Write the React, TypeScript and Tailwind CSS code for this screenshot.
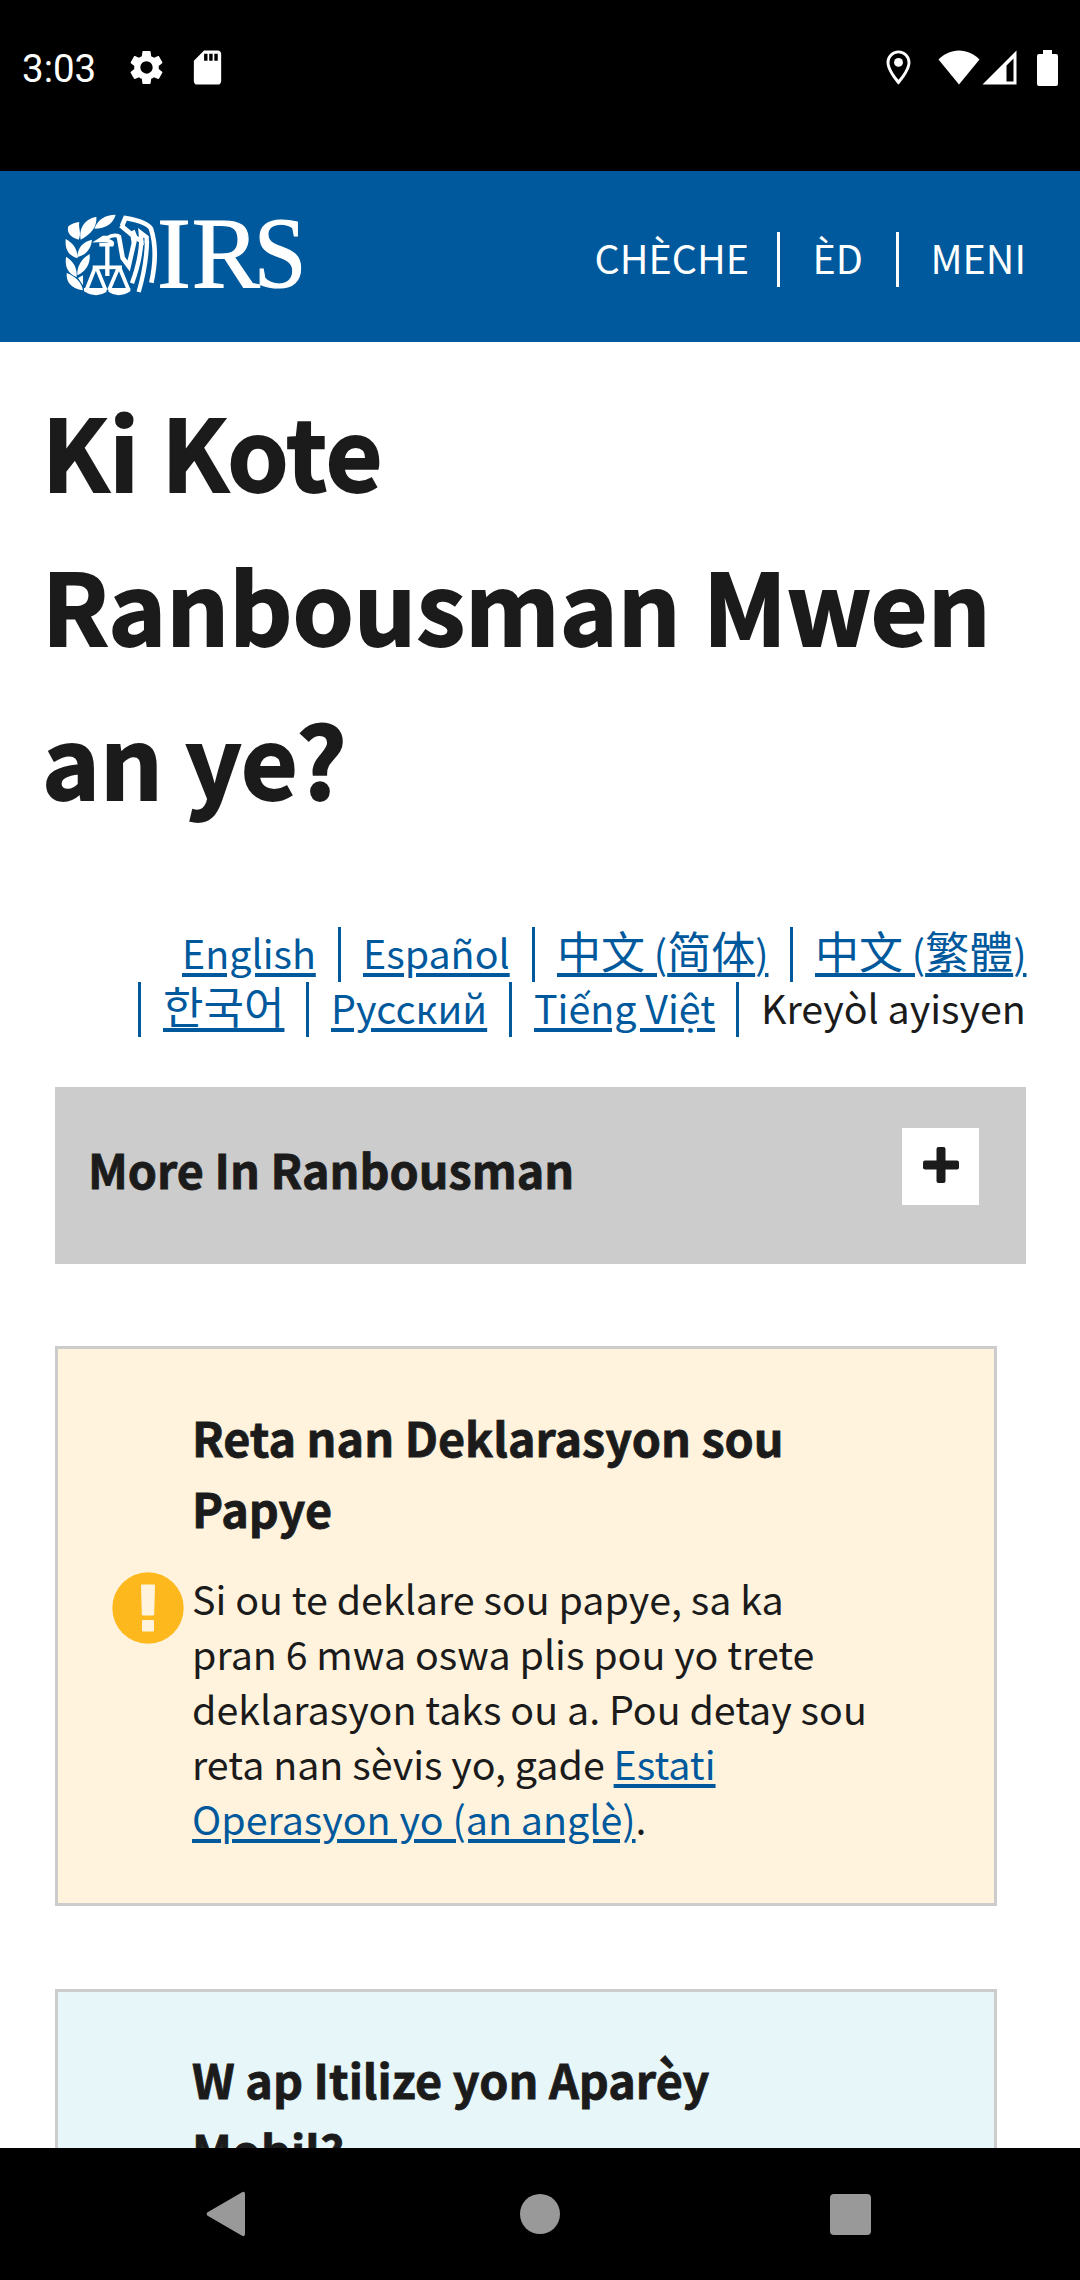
import React from "react";

const LINK = "text-[#00599c] underline decoration-[4px] underline-offset-[4px]";

function StatusBar() {
  return (
    <div className="flex h-[171px] items-start justify-between bg-black pt-[47px] text-white">
      <div className="flex h-[41px] items-center">
        <span className="w-[104px] pl-[22px] pt-px font-['Roboto',sans-serif] text-[38.5px] leading-[41px]">3:03</span>
        <svg className="ml-[22px] size-[41px]" viewBox="0 0 24 24" fill="currentColor">
          <path d="M19.14 12.94c.04-.3.06-.61.06-.94 0-.32-.02-.64-.07-.94l2.03-1.58c.18-.14.23-.41.12-.61l-1.92-3.32c-.12-.22-.37-.29-.59-.22l-2.39.96c-.5-.38-1.03-.7-1.62-.94l-.36-2.54c-.04-.24-.24-.41-.48-.41h-3.84c-.24 0-.43.17-.47.41l-.36 2.54c-.59.24-1.13.57-1.62.94l-2.39-.96c-.22-.08-.47 0-.59.22L2.74 8.87c-.12.21-.08.47.12.61l2.03 1.58c-.05.3-.09.63-.09.94s.02.64.07.94l-2.03 1.58c-.18.14-.23.41-.12.61l1.92 3.32c.12.22.37.29.59.22l2.39-.96c.5.38 1.03.7 1.62.94l.36 2.54c.05.24.24.41.48.41h3.84c.24 0 .44-.17.47-.41l.36-2.54c.59-.24 1.13-.56 1.62-.94l2.39.96c.22.08.47 0 .59-.22l1.92-3.32c.12-.22.07-.47-.12-.61l-2.01-1.58zM12 15.6A3.61 3.61 0 0 1 8.4 12c0-1.98 1.62-3.6 3.6-3.6s3.6 1.62 3.6 3.6-1.62 3.6-3.6 3.6z" />
        </svg>
        <svg className="ml-5 size-[41px]" viewBox="0 0 24 24" fill="currentColor">
          <path d="M18 2h-8L4.02 8 4 20c0 1.1.9 2 2 2h12c1.1 0 2-.9 2-2V4c0-1.1-.9-2-2-2zm-6 6h-2V4h2v4zm3 0h-2V4h2v4zm3 0h-2V4h2v4z" />
        </svg>
      </div>
      <div className="flex h-[41px] items-center">
        <svg className="size-[41px]" viewBox="0 0 24 24" fill="currentColor">
          <path d="M12 2C8.13 2 5 5.13 5 9c0 5.25 7 13 7 13s7-7.75 7-13c0-3.87-3.13-7-7-7zM6.7 9a5.3 5.3 0 0 1 10.6 0c0 3-3 7.6-5.3 10.2C9.7 16.6 6.7 12 6.7 9z" />
          <circle cx="12" cy="9" r="2.6" />
        </svg>
        <svg className="ml-[19px] h-[35px] w-[42px]" viewBox="0 0 42 35" fill="currentColor">
          <path d="M.5 9.5C6 4 13 .5 21 .5S36 4 41.5 9.5L21 34.5z" />
        </svg>
        <svg className="ml-[2px] h-[35px] w-[35px]" viewBox="0 0 35 35" fill="currentColor" fillRule="evenodd">
          <path d="M34.5 .5V34.5H.5zM31.5 8.5L24.5 15.5V31.5H31.5z" />
        </svg>
        <svg className="ml-5 mr-[22px] h-[36px] w-[21px]" viewBox="0 0 21 36" fill="currentColor">
          <path d="M6 0h9v4h4a2 2 0 0 1 2 2v28a2 2 0 0 1-2 2H2a2 2 0 0 1-2-2V6a2 2 0 0 1 2-2h4z" />
        </svg>
      </div>
    </div>
  );
}

function Logo() {
  return (
    <svg className="ml-[50px] mt-[29px] h-[110px] w-[270px]" viewBox="0 0 810 330" fill="#fff">
      <path d="M133 86C143 58 165 45 197 44C190 70 168 86 133 86Z" />
      <path d="M92 119C86 88 100 58 139 50C142 78 124 102 92 119Z" />
      <path d="M86 119C58 112 50 95 55 79C66 70 76 68 88 66C84 82 96 100 86 119Z" />
      <path d="M82 171C83 144 97 126 126 119C123 148 106 166 82 171Z" />
      <path d="M83 175C53 166 45 146 47 117C70 130 83 148 83 175Z" />
      <path d="M82 226C80 200 94 176 119 162C122 192 107 215 82 226Z" />
      <path d="M80 232C50 218 45 198 48 170C70 183 82 203 80 232Z" />
      <path d="M99 271C64 266 48 247 50 219C76 229 94 246 99 271Z" />
      <path d="M84 234L99 226V256Z" />
      <g fill="none" stroke="#fff" strokeWidth="11">
        <path d="M172 136V228" strokeWidth="13" />
        <path d="M128 202H216" />
        <path d="M135 204L109 270M140 204L167 270M205 204L177 270M209 204L236 270" />
        <path d="M148 134H186C190 124 178 120 147 121L160 113H174Q186 103 208 108" />
        <path d="M206 106L218 174L236 198L254 120" strokeWidth="14" />
        <path d="M216 78L226 54C260 60 294 70 303 86C317 130 317 190 304 248" strokeWidth="14" />
        <path d="M212 76L248 106L252 128" strokeWidth="14" />
        <path d="M274 122C272 172 262 206 246 250M291 122C290 186 280 228 266 276" strokeWidth="13" />
        <path d="M248 92L256 112L274 124L272 98L290 112V130" strokeWidth="13" />
      </g>
      <path d="M102 264H171L169 276Q138 296 102 274ZM174 264H241V274Q206 296 176 276Z" />
      <g fontFamily="Liberation Serif, serif" fontSize="306" stroke="#fff" strokeWidth="3.5">
        <text x="321" y="265">I</text>
        <text x="425" y="265">R</text>
        <text transform="translate(611 265) scale(.93 1)">S</text>
      </g>
    </svg>
  );
}

function Header() {
  return (
    <header className="flex h-[171px] items-start justify-between bg-[#00599c] text-white">
      <Logo />
      <nav className="mr-[54px] mt-[61px] flex h-[55px] text-[39.5px] leading-[49px]">
        <span className="w-[182px]">CHÈCHE</span>
        <span className="w-[119px] border-l-[3px] border-white pl-[33px]">ÈD</span>
        <span className="border-l-[3px] border-white pl-[32px]">MENI</span>
      </nav>
    </header>
  );
}

function Lang({ children, width, bar, current }: { children: React.ReactNode; width: string; bar?: boolean; current?: boolean }) {
  return (
    <li className={`flex h-[55px] ${bar ? "border-l-[3px] border-[#00599c] pl-[22px]" : ""}`}>
      <a className={`${width} -mt-[3px] whitespace-nowrap ${current ? "text-[#1b1b1b]" : LINK}`}>{children}</a>
    </li>
  );
}

function Cjk({ children }: { children: string }) {
  return <span className="text-[44px] leading-none">{children}</span>;
}

function Languages() {
  return (
    <div className="mr-[54px] mt-[93px] flex flex-col text-[39.4px] leading-[55px]">
      <ul className="flex justify-end gap-[22px]">
        <Lang width="w-[134px]">English</Lang>
        <Lang width="w-[147px]" bar>Español</Lang>
        <Lang width="w-[211px]" bar><Cjk>中文</Cjk> (<Cjk>简体</Cjk>)</Lang>
        <Lang width="w-[211px]" bar><Cjk>中文</Cjk> (<Cjk>繁體</Cjk>)</Lang>
      </ul>
      <ul className="flex justify-end gap-[22px]">
        <Lang width="w-[121px]" bar><Cjk>한국어</Cjk></Lang>
        <Lang width="w-[156px]" bar>Русский</Lang>
        <Lang width="w-[180px]" bar>Tiếng Việt</Lang>
        <Lang width="w-[265px]" bar current>Kreyòl ayisyen</Lang>
      </ul>
    </div>
  );
}

function WarningIcon() {
  return (
    <svg className="mt-[223px] size-[72px] shrink-0" viewBox="0 0 72 72">
      <circle cx="36" cy="36" r="35.7" fill="#fdb81e" />
      <path d="M30 12.5h12a1 1 0 0 1 1 1l-.8 29a1 1 0 0 1-1 1H30.8a1 1 0 0 1-1-1L29 13.500a1 1 0 0 1 1-1z" fill="#fff3de" />
      <rect x="30" y="48" width="12" height="11.5" rx="1" fill="#fff3de" />
    </svg>
  );
}

const SUBHEAD = "text-[46.7px] font-bold leading-[71px] [-webkit-text-stroke:0.8px_#1b1b1b]";

export default function App() {
  return (
    <div className="flex h-[2280px] w-[1080px] flex-col overflow-hidden bg-white font-['Noto_Sans_CJK_SC',sans-serif] text-[#1b1b1b]">
      <StatusBar />
      <main className="h-[1977px] overflow-hidden">
        <Header />
        <h1 className="ml-[42px] mt-[30px] text-[98.2px] font-bold leading-[154px] [-webkit-text-stroke:1.8px_#1b1b1b]">
          Ki Kote<br />Ranbousman Mwen<br />an ye?
        </h1>
        <Languages />
        <section className="ml-[55px] mr-[54px] mt-[50px] flex h-[177px] items-start justify-between bg-[#ccc] pl-[33px] pr-[47px] pt-[41px]">
          <h2 className={`mt-[5px] ${SUBHEAD}`}>More In Ranbousman</h2>
          <button className="flex size-[77px] items-start justify-center bg-white pt-[19px]">
            <svg className="size-[36px]" viewBox="0 0 36 36" fill="#1b1b1b">
              <rect x="13.5" y="0" width="9" height="36" rx="2" />
              <rect x="0" y="13.5" width="36" height="9" rx="2" />
            </svg>
          </button>
        </section>
        <section className="ml-[55px] mt-[82px] flex h-[560px] w-[942px] items-start border-[3px] border-[#ccc] bg-[#fff3de] pl-[54px]">
          <WarningIcon />
          <div className="ml-[8px] w-[690px] pt-[52px]">
            <h3 className={SUBHEAD}>Reta nan Deklarasyon sou<br />Papye</h3>
            <p className="mt-[27px] whitespace-nowrap text-[39.4px] leading-[55px]">
              Si ou te deklare sou papye, sa ka<br />
              pran 6 mwa oswa plis pou yo trete<br />
              deklarasyon taks ou a. Pou detay sou<br />
              reta nan sèvis yo, gade <a className={LINK}>Estati<br />Operasyon yo (an anglè)</a>.
            </p>
          </div>
        </section>
        <section className="ml-[55px] mt-[83px] h-[560px] w-[942px] border-[3px] border-[#ccc] bg-[#e7f6f8] pl-[134px] pt-[51px]">
          <h3 className={SUBHEAD}>W ap Itilize yon Aparèy<br />Mobil?</h3>
        </section>
      </main>
      <nav className="flex h-[132px] items-center justify-between bg-black pl-[206px] pr-[209px]">
        <svg className="h-[46px] w-[40px]" viewBox="0 0 40 46" fill="#999">
          <path d="M1.2 21.5L36.5 1Q39 .3 39 3V43Q39 45.7 36.5 45L1.2 24.5Q0 23 1.2 21.5Z" />
        </svg>
        <span className="ml-[4px] size-[40px] rounded-full bg-[#999]" />
        <span className="size-[41px] rounded-[4px] bg-[#999]" />
      </nav>
    </div>
  );
}
